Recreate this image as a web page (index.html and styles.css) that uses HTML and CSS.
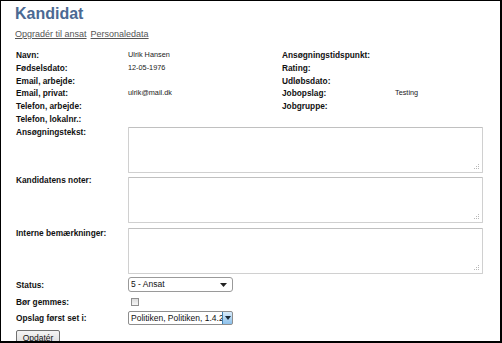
FILE: index.html
```html
<!DOCTYPE html>
<html lang="da">
<head>
<meta charset="utf-8">
<title>Kandidat</title>
<link rel="stylesheet" href="styles.css">
</head>
<body>
<div class="frame">
  <h1 class="title">Kandidat</h1>
  <div class="links">
    <a class="link" href="#">Opgradér til ansat</a>
    <a class="link" href="#">Personaledata</a>
  </div>
  <div class="info">
    <div class="lbl">Navn:</div><div class="val">Ulrik Hansen</div><div class="lbl">Ansøgningstidspunkt:</div><div class="val"></div>
    <div class="lbl">Fødselsdato:</div><div class="val">12-05-1976</div><div class="lbl">Rating:</div><div class="val"></div>
    <div class="lbl">Email, arbejde:</div><div class="val"></div><div class="lbl">Udløbsdato:</div><div class="val"></div>
    <div class="lbl">Email, privat:</div><div class="val">ulrik@mail.dk</div><div class="lbl">Jobopslag:</div><div class="val">Testing</div>
    <div class="lbl">Telefon, arbejde:</div><div class="val"></div><div class="lbl">Jobgruppe:</div><div class="val"></div>
    <div class="lbl">Telefon, lokalnr.:</div><div class="val"></div><div class="lbl"></div><div class="val"></div>
  </div>
  <div class="fields">
    <div class="frow top r1">
      <div class="flbl">Ansøgningstekst:</div>
      <div class="ta-wrap">
        <textarea class="ta"></textarea>
        <svg class="grip" width="5" height="5" viewBox="0 0 5 5"><g fill="#b8b8b8"><rect x="4" y="0" width="1" height="1"/><rect x="2" y="2" width="1" height="1"/><rect x="4" y="2" width="1" height="1"/><rect x="0" y="4" width="1" height="1"/><rect x="2" y="4" width="1" height="1"/><rect x="4" y="4" width="1" height="1"/></g></svg>
      </div>
    </div>
    <div class="frow top r2">
      <div class="flbl">Kandidatens noter:</div>
      <div class="ta-wrap">
        <textarea class="ta"></textarea>
        <svg class="grip" width="5" height="5" viewBox="0 0 5 5"><g fill="#b8b8b8"><rect x="4" y="0" width="1" height="1"/><rect x="2" y="2" width="1" height="1"/><rect x="4" y="2" width="1" height="1"/><rect x="0" y="4" width="1" height="1"/><rect x="2" y="4" width="1" height="1"/><rect x="4" y="4" width="1" height="1"/></g></svg>
      </div>
    </div>
    <div class="frow top r3">
      <div class="flbl">Interne bemærkninger:</div>
      <div class="ta-wrap">
        <textarea class="ta"></textarea>
        <svg class="grip" width="5" height="5" viewBox="0 0 5 5"><g fill="#b8b8b8"><rect x="4" y="0" width="1" height="1"/><rect x="2" y="2" width="1" height="1"/><rect x="4" y="2" width="1" height="1"/><rect x="0" y="4" width="1" height="1"/><rect x="2" y="4" width="1" height="1"/><rect x="4" y="4" width="1" height="1"/></g></svg>
      </div>
    </div>
    <div class="frow mid r4">
      <div class="flbl">Status:</div>
      <div class="sel">
        <span class="sel-text">5 - Ansat</span>
        <svg class="sel-arrow" width="7" height="4" viewBox="0 0 7 4"><path d="M0 0H7L3.5 4Z" fill="#222"/></svg>
      </div>
    </div>
    <div class="frow mid r5">
      <div class="flbl">Bør gemmes:</div>
      <span class="cb"></span>
    </div>
    <div class="frow mid r6">
      <div class="flbl">Opslag først set i:</div>
      <div class="sel sel2">
        <span class="sel-text">Politiken, Politiken, 1.4.2012</span>
        <span class="sel-btn"><svg width="6" height="4" viewBox="0 0 6 4"><path d="M0 0H6L3 4Z" fill="#1b2a3a"/></svg></span>
      </div>
    </div>
    <div class="brow">
      <button class="btn" type="button">Opdatér</button>
    </div>
  </div>
</div>
</body>
</html>
```
FILE: styles.css
```css
html, body {
  margin: 0;
  padding: 0;
  background: #fff;
}
.frame {
  box-sizing: border-box;
  width: 502px;
  height: 343px;
  border-style: solid;
  border-color: #000;
  border-width: 1px 2px 2px 1px;
  padding: 4px 0 0 15px;
  overflow: hidden;
  font-family: "Liberation Sans", Arial, sans-serif;
  color: #1a1a1a;
}
.title {
  margin: 0 0 0 -1px;
  font-size: 16px;
  line-height: 18px;
  font-weight: bold;
  color: #4b6993;
}
.links {
  display: flex;
  gap: 4px;
  margin: 6px 0 0 -1px;
  font-size: 9px;
  line-height: 11px;
}
.link {
  color: #555;
  text-decoration: underline;
}
.info {
  display: grid;
  grid-template-columns: 112px 154px 113px 1fr;
  grid-auto-rows: 12.8px;
  align-items: center;
  margin-top: 9px;
}
.lbl {
  font-size: 8.3px;
  font-weight: bold;
  line-height: 12.8px;
  color: #111;
  white-space: nowrap;
}
.val {
  font-size: 7.3px;
  line-height: 12.8px;
  color: #222;
  white-space: nowrap;
}
.fields {
  margin-top: 1.6px;
  display: flex;
  flex-direction: column;
}
.frow {
  display: flex;
}
.frow.top {
  align-items: flex-start;
}
.frow.mid {
  align-items: center;
}
.flbl {
  width: 112px;
  flex: none;
  font-size: 8.3px;
  font-weight: bold;
  line-height: 10px;
  color: #111;
  white-space: nowrap;
}
.r2 { margin-top: 4px; }
.r2 .flbl { margin-top: -2px; }
.r3 { margin-top: 5px; }
.r4 { margin-top: 3px; }
.r5 { margin-top: 5px; }
.r6 { margin-top: 4px; }
.brow {
  display: flex;
  margin-top: 5px;
}
.ta-wrap {
  position: relative;
  width: 355px;
  height: 46px;
}
.ta {
  display: block;
  box-sizing: border-box;
  width: 355px;
  height: 46px;
  margin: 0;
  padding: 2px;
  border: 1px solid #d0d0d0;
  border-top-color: #c0c0c0;
  border-radius: 1px;
  background: #fff;
  font-family: inherit;
  font-size: 8px;
  resize: none;
  outline: none;
}
.grip {
  position: absolute;
  right: 4px;
  bottom: 4px;
}
.sel {
  box-sizing: border-box;
  width: 105px;
  height: 15px;
  display: flex;
  align-items: center;
  border: 1px solid #9a9a9a;
  border-radius: 3px;
  background: #fff;
  overflow: hidden;
  padding-left: 2px;
}
.sel-text {
  flex: 1;
  min-width: 0;
  overflow: hidden;
  white-space: nowrap;
  font-size: 8.5px;
  line-height: 13px;
  color: #111;
}
.sel-arrow {
  flex: none;
  margin-right: 5px;
}
.sel2 {
  height: 14px;
  border-radius: 2px;
  border-color: #8e8e8e;
  padding-right: 0;
}
.sel-btn {
  flex: none;
  box-sizing: border-box;
  width: 11px;
  height: 14px;
  margin: -1px -1px -1px 0;
  display: flex;
  align-items: center;
  justify-content: center;
  border: 1px solid #3c7fb1;
  border-radius: 0 2px 2px 0;
  background: linear-gradient(#d9ecfb, #8cc0ea);
}
.cb {
  box-sizing: border-box;
  display: block;
  width: 8px;
  height: 8px;
  margin-left: 3px;
  border: 1px solid #8f8f8f;
  background: linear-gradient(#dcdcdc, #f6f6f6);
}
.btn {
  box-sizing: border-box;
  width: 44px;
  height: 15px;
  margin: 0;
  padding: 0;
  border: 1px solid #707070;
  border-radius: 2px;
  background: linear-gradient(#f4f4f4, #dedede);
  font-family: inherit;
  font-size: 8.5px;
  line-height: 12px;
  color: #111;
}
```
